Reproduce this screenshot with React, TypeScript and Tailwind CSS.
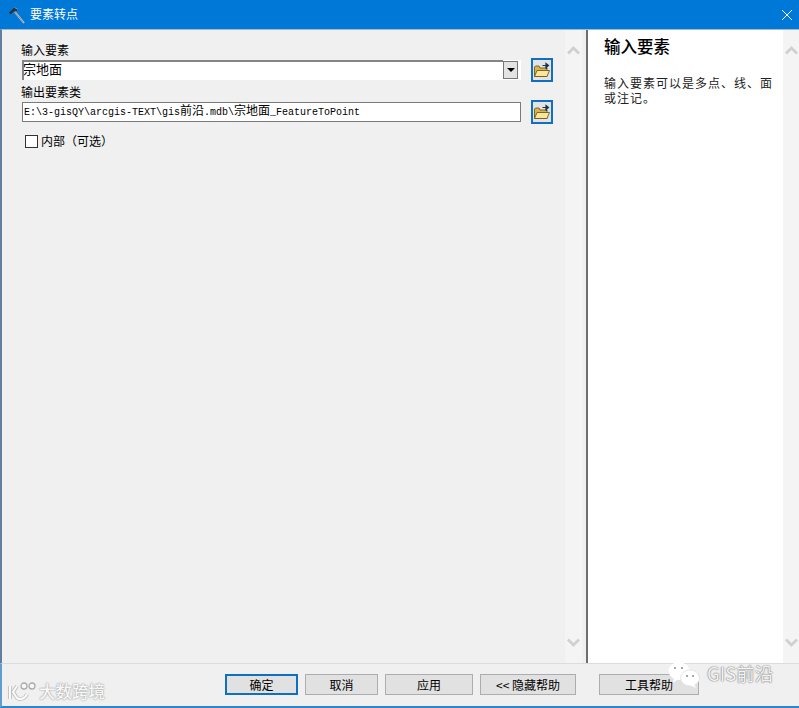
const font = { fontFamily: '"Noto Sans CJK SC", sans-serif' };

function Hammer() {
  return (
    <svg width="18" height="18" viewBox="0 0 18 18" className="ml-[8px]">
      <path d="M7 6 L16 17" stroke="#d6d6d6" strokeWidth="1.8" />
      <path d="M7 6 L15.6 16.6" stroke="#77776a" strokeWidth="0.8" />
      <path d="M1 6.5 L6.5 1.5 L10 3.5 L8.5 5 L6.5 4.8 L2.5 8.5 Z" fill="#2e2e2e" />
      <path d="M6.5 1.5 L10 3.5" stroke="#a0a0a0" strokeWidth="0.8" />
    </svg>
  );
}

function FolderBtn() {
  return (
    <div className="w-[22px] h-[24px] border-[2px] border-[#0f6fc0] bg-[#e3e3e3] flex items-center justify-center shrink-0">
      <svg width="18" height="18" viewBox="0 0 18 18">
        <path d="M1.5 6 L1.5 15.5 L14 15.5 L14 7 L7 7 L6 5 L2.5 5 Z" fill="#d9b453" stroke="#6f5a22" strokeWidth="0.9" />
        <path d="M1.5 15.5 L4 9.5 L16.5 9.5 L14 15.5 Z" fill="#fbe698" stroke="#6f5a22" strokeWidth="0.9" />
        <path d="M9.5 4.5 L13 4.5 M13 2.5 L15.5 4.5 L13 6.5 Z" stroke="#1c3550" strokeWidth="1.2" fill="#1c3550" />
        <path d="M13.5 4.5 L13.5 8" stroke="#1c3550" strokeWidth="1.2" />
      </svg>
    </div>
  );
}

function Chevron({ up }: { up?: boolean }) {
  return (
    <svg width="13" height="9" viewBox="0 0 13 9">
      <path d={up ? "M1 7.5 L6.5 2 L12 7.5" : "M1 1.5 L6.5 7 L12 1.5"} fill="none" stroke="#d0d0d0" strokeWidth="2.8" />
    </svg>
  );
}

function ScrollBar({ width }: { width: string }) {
  return (
    <div className={`${width} shrink-0 bg-[#f4f4f4] flex flex-col items-center justify-between pt-[16px] pb-[16px]`}>
      <Chevron up />
      <Chevron />
    </div>
  );
}

function Btn({ label, width, primary }: { label: string; width: string; primary?: boolean }) {
  return (
    <div
      className={`${width} h-[21px] flex items-center justify-center bg-[#e1e1e1] text-[12px] text-black ${
        primary ? "border-[2px] border-[#0f6fc0]" : "border border-[#adadad]"
      }`}
    >
      {label}
    </div>
  );
}

export default function App() {
  return (
    <div className="relative w-[799px] h-[708px] overflow-hidden bg-[#f0f0f0] flex flex-col" style={font}>
      <div className="h-[29px] bg-[#0078d7] flex items-center shrink-0 text-white">
        <Hammer />
        <span className="ml-[4px] text-[12px] -mt-[2px]">要素转点</span>
        <svg width="12" height="12" viewBox="0 0 12 12" className="ml-auto mr-[6px]">
          <path d="M1 1 L11 11 M11 1 L1 11" stroke="#fff" strokeWidth="1" />
        </svg>
      </div>

      <div className="h-[634px] flex shrink-0 border-t border-[#a9b8c6] border-l-[2px] border-l-[#5f7f9f]">
        <div className="w-[563px] shrink-0 bg-[#f0f0f0] pl-[20px] pt-[12px] text-[12px] text-black">
          <div className="leading-[16px] h-[16px] mb-[2px] -ml-[1px]">输入要素</div>
          <div className="flex items-start gap-[10px]">
            <div className="w-[499px] h-[20px] bg-white flex items-start">
              <div className="flex-1 h-[20px] border-t-[2px] border-l-[2px] border-[#858585] overflow-hidden">
                <div className="text-[13px] leading-[15px] -ml-[1px] -mt-[1px]">宗地面</div>
              </div>
              <div className="w-[15px] h-[18px] mt-[1px] bg-[#e3e3e3] border border-[#777] flex items-center justify-center mr-[3px]">
                <div className="w-0 h-0 border-l-[4px] border-r-[4px] border-t-[4px] border-l-transparent border-r-transparent border-t-black" />
              </div>
            </div>
            <div className="-mt-[2px]">
              <FolderBtn />
            </div>
          </div>
          <div className="leading-[16px] h-[16px] mt-[2px] mb-[2px] -ml-[1px]">输出要素类</div>
          <div className="flex items-start gap-[10px]">
            <div
              className="w-[499px] h-[20px] bg-white border border-[#7a7a7a] flex items-center pl-[1px] text-[10px] whitespace-pre"
              style={{ fontFamily: '"Liberation Mono", "Noto Sans CJK SC", monospace' }}
            >
              E:\3-gisQY\arcgis-TEXT\gis<span className="text-[12px]">前沿</span>.mdb\<span className="text-[12px]">宗地面</span>_FeatureToPoint
            </div>
            <div className="-mt-[2px]">
              <FolderBtn />
            </div>
          </div>
          <div className="flex items-center mt-[9px] ml-[3px] h-[16px]">
            <div className="w-[13px] h-[13px] bg-white border border-[#333]" />
            <span className="ml-[3px]">内部（可选）</span>
          </div>
        </div>
        <ScrollBar width="w-[17px]" />
        <div className="w-[4px] shrink-0 bg-[#f0f0f0]" />
        <div className="w-[2px] shrink-0 bg-[#6e6e6e]" />
        <div className="w-[195px] shrink-0 bg-white pl-[16px] pr-[6px] text-black">
          <div className="text-[16.5px] font-medium leading-[20px] mt-[6px]">输入要素</div>
          <div className="text-[12px] leading-[15px] mt-[19px] tracking-[1px] text-[#222]">
            输入要素可以是多点、线、面或注记。
          </div>
        </div>
        <ScrollBar width="flex-1" />
      </div>

      <div className="flex-1 border-t border-[#dcdcdc] border-l-[2px] border-l-[#5f9fd0] border-b-[2px] border-b-[#2a86c8] flex items-start pt-[10px]">
        <div className="ml-[223px]">
          <Btn label="确定" width="w-[73px]" primary />
        </div>
        <div className="ml-[7px]">
          <Btn label="取消" width="w-[73px]" />
        </div>
        <div className="ml-[7px]">
          <Btn label="应用" width="w-[88px]" />
        </div>
        <div className="ml-[7px]">
          <Btn label="<< 隐藏帮助" width="w-[96px]" />
        </div>
        <div className="ml-[23px]">
          <Btn label="工具帮助" width="w-[100px]" />
        </div>
      </div>

      <div className="absolute left-[7px] top-[681px] flex items-center text-[#f8f8f8]" style={{ textShadow: "0 0 2px #999, 0 0 1px #aaa" }}>
        <svg width="31" height="21" viewBox="0 0 31 21">
          <path d="M3 5 L3 18 M10 5 L6 11 L10 17 C13 19 18 18 20 13" fill="none" stroke="#b4b4b4" strokeWidth="3.6" />
          <path d="M3 5 L3 18 M10 5 L6 11 L10 17 C13 19 18 18 20 13" fill="none" stroke="#fafafa" strokeWidth="2.2" />
          <circle cx="17" cy="5" r="3" fill="#f6f6f6" stroke="#aaaaaa" strokeWidth="1.3" />
          <circle cx="25" cy="5" r="3" fill="#f6f6f6" stroke="#aaaaaa" strokeWidth="1.3" />
        </svg>
        <span className="ml-[1px] text-[16.5px] leading-[20px] -mt-[1px] font-medium">大数跨境</span>
      </div>

      <div className="absolute left-[668px] top-[661px] flex items-center">
        <svg width="32" height="28" viewBox="0 0 32 28">
          <ellipse cx="11" cy="10" rx="10.5" ry="9" fill="#fff" />
          <path d="M6 17 L5 22 L10 18 Z" fill="#fff" />
          <ellipse cx="22" cy="17" rx="9.5" ry="8" fill="#fff" stroke="#e0e0e0" strokeWidth="0.8" />
          <path d="M26 23 L28 27 L22 24 Z" fill="#fff" />
          <circle cx="7" cy="7" r="1" fill="#8a8a8a" />
          <circle cx="14" cy="7" r="1" fill="#8a8a8a" />
          <circle cx="19" cy="15" r="1" fill="#8a8a8a" />
          <circle cx="25" cy="15" r="1" fill="#8a8a8a" />
        </svg>
        <span className="ml-[7px] text-[18.5px] text-[#f4f4f4] leading-[24px] -mt-[4px]" style={{ textShadow: "0 0 1.5px #666, 0 0 1px #888" }}>
          GIS前沿
        </span>
      </div>
    </div>
  );
}
